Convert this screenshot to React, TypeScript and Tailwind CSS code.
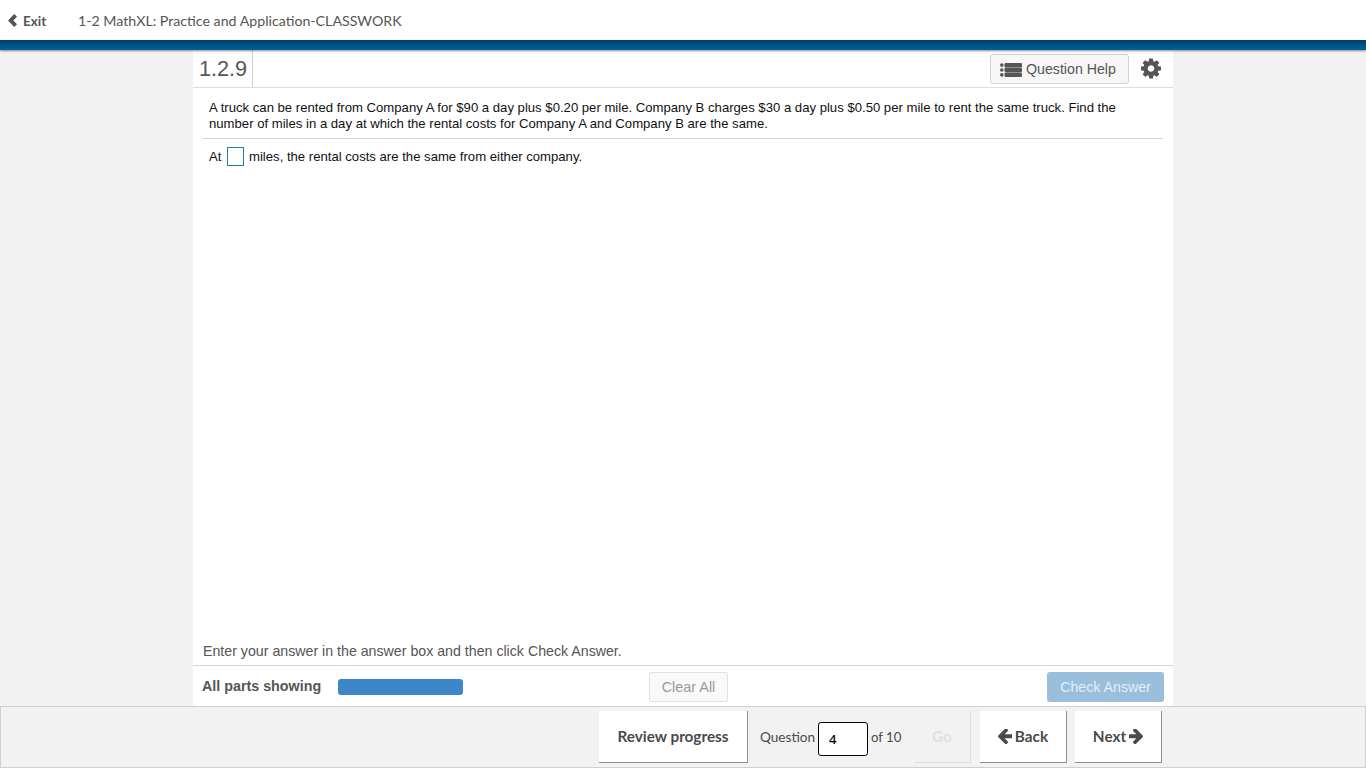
import React from "react";

const Gear = () => (
  <svg width="20" height="21" viewBox="0 0 1536 1536" fill="#555">
    <path d="M1024 768q0-106-75-181t-181-75-181 75-75 181 75 181 181 75 181-75 75-181zm512-109v222q0 12-8 23t-20 13l-185 28q-19 54-39 91 35 50 107 138 10 12 10 25t-9 23q-27 37-99 108t-94 71q-12 0-26-9l-138-108q-44 23-91 38-16 136-29 186-7 28-36 28h-222q-14 0-24.5-8.5t-11.5-21.5l-28-184q-49-16-90-37l-141 107q-10 9-25 9-14 0-25-11-126-114-165-168-7-10-7-23 0-12 8-23 15-21 51-66.5t54-70.5q-27-50-41-99l-183-27q-13-2-21-12.5t-8-23.5v-222q0-12 8-23t19-13l186-28q14-46 39-92-40-57-107-138-10-12-10-24 0-10 9-23 26-36 98.5-107.5t94.5-71.5q13 0 26 10l138 107q44-23 91-38 16-136 29-186 7-28 36-28h222q14 0 24.5 8.5t11.5 21.5l28 184q49 16 90 37l142-107q9-9 24-9 13 0 25 10 129 119 165 170 7 8 7 22 0 12-8 23-15 21-51 66.5t-54 70.5q26 50 41 98l183 28q13 2 21 12.5t8 23.5z" />
  </svg>
);

const ListIcon = () => (
  <svg width="22" height="14" viewBox="0 0 22 14" fill="#555">
    <circle cx="1.8" cy="2.1" r="1.8" />
    <circle cx="1.8" cy="7" r="1.8" />
    <circle cx="1.8" cy="11.9" r="1.8" />
    <rect x="4.5" y="0" width="17.5" height="4.4" rx="1.2" />
    <rect x="4.5" y="4.8" width="17.5" height="4.4" rx="1.2" />
    <rect x="4.5" y="9.6" width="17.5" height="4.4" rx="1.2" />
  </svg>
);

const Arrow = ({ left }: { left?: boolean }) => (
  <svg width="14" height="15" viewBox="96 200 1376 1360" fill="#4a4a4a" style={left ? { transform: "scaleX(-1)" } : undefined}>
    <path d="M1472 960q0 54-37 91l-651 651q-39 37-91 37-51 0-90-37l-75-75q-38-38-38-91t38-91l293-293h-704q-52 0-84.5-37.5t-32.5-90.5v-128q0-53 32.5-90.5t84.5-37.5h704l-293-294q-38-36-38-90t38-90l75-75q38-38 90-38 53 0 91 38l651 651q37 35 37 90z" transform="translate(0,-100) " />
  </svg>
);

export default function App() {
  return (
    <div className="h-[768px] w-[1366px] overflow-hidden flex flex-col bg-[#f2f2f2] font-['Liberation_Sans',Arial,sans-serif]">
      <header className="h-10 shrink-0 bg-white flex items-center pl-2 pt-[2px] font-['Lato',sans-serif] text-[#555]">
        <svg width="9" height="13" viewBox="0 0 9 13" fill="#555" className="mr-[6px] mb-[2px]">
          <path d="M6.2 0 L9 2.8 L5.3 6.5 L9 10.2 L6.2 13 L0 6.5 Z" />
        </svg>
        <span className="font-bold text-[13.5px] w-[55px]">Exit</span>
        <span className="text-[14.2px]">1-2 MathXL: Practice and Application-CLASSWORK</span>
      </header>
      <div className="h-[10px] shrink-0 bg-gradient-to-b from-[#003f68] to-[#006399] shadow-[0_1px_2px_rgba(0,0,0,0.45)] relative z-10" />

      <main className="w-[980px] h-[656px] shrink-0 ml-[193px] bg-white flex flex-col">
        <div className="h-[38px] shrink-0 border-b border-[#dedede] flex items-center">
          <div className="w-[60px] h-full border-r border-[#cfcfcf] pl-[6px] text-[21.6px] leading-[37px] text-[#555]">1.2.9</div>
          <button className="ml-auto w-[139px] h-[30px] mr-[44px] mt-[1px] pt-[2px] rounded-[3px] border border-[#d4d4d4] bg-[#f7f7f7] flex items-center pl-[9px] gap-[4px] text-[14.2px] text-[#555]">
            <ListIcon />
            Question Help
          </button>
          <div className="absolute left-[1141px] top-[58px]"><Gear /></div>
        </div>

        <div className="flex-1 min-h-0 px-[10px] text-[13.13px] text-[#111]">
          <div className="pl-[6px] pr-[40px] pt-[12px] pb-[6px] leading-4 border-b border-[#d4d4d4]">
            A truck can be rented from Company A for $90 a day plus $0.20 per mile. Company B charges $30 a day plus $0.50 per mile to rent the same truck. Find the number of miles in a day at which the rental costs for Company A and Company B are the same.
          </div>
          <div className="pl-[6px] pt-[8px] flex items-center h-[26px]">
            <span className="w-[18px] pt-[1px]">At</span>
            <span className="inline-block w-[17px] h-[19px] mr-[5px] border border-[#1f8296]" />
            <span className="pt-[1px]">miles, the rental costs are the same from either company.</span>
          </div>
        </div>

        <div className="h-[28px] shrink-0 border-b border-[#d4d4d4] px-[10px] text-[14.2px] leading-[26px] text-[#555]">
          Enter your answer in the answer box and then click Check Answer.
        </div>
        <div className="h-[40px] shrink-0 flex items-center pl-[9px] pr-[9px] text-[#555]">
          <span className="font-bold text-[14.3px] w-[136px] pt-[2px]">All parts showing</span>
          <div className="w-[125px] h-4 mt-[1px] rounded-[3px] bg-[#3d87c8]" />
          <button className="ml-[186px] w-[79px] h-[30px] mt-[2px] pt-[2px] rounded-[2px] border border-[#e2e2e2] bg-[#f9f9f9] text-[14.4px] text-[#999]">Clear All</button>
          <button className="ml-auto w-[117px] h-[30px] mt-[2px] pt-[2px] rounded-[3px] bg-[#99bfdd] text-[14.2px] text-[#e2eef8]">Check Answer</button>
        </div>
      </main>

      <footer className="flex-1 min-h-0 border border-[#cfcfcf] flex items-start pt-[4px] pr-[203px] justify-end font-['Lato',sans-serif] text-[#4a4a4a]">
        <button className="w-[149px] h-[52px] bg-white font-bold text-[15.3px] border-r border-b border-[#8f8f8f]">Review progress</button>
        <span className="ml-[12px] mt-[17px] w-[54px] text-[13.6px] leading-[18px] whitespace-nowrap">Question</span>
        <span className="ml-[4px] mt-[11px] w-[50px] h-[34px] rounded-[3px] border border-black bg-white text-black text-[13px] font-medium leading-[32px] pl-[10px] font-['Noto_Sans',sans-serif]">4</span>
        <span className="ml-[3px] mt-[17px] w-[30px] text-[13.2px] leading-[18px] whitespace-nowrap">of 10</span>
        <button className="ml-[13px] w-[57px] h-[52px] bg-[#f2f2f2] border-r border-b border-[#dcdcdc] text-[#e0e0e0] font-bold text-[15.3px]">Go</button>
        <button className="ml-[9px] w-[87px] h-[52px] bg-white border-r border-b border-[#8f8f8f] font-bold text-[15.3px] flex items-center justify-center gap-[3px]"><Arrow left />Back</button>
        <button className="ml-[8px] w-[87px] h-[52px] bg-white border-r border-b border-[#8f8f8f] font-bold text-[15.3px] flex items-center justify-center gap-[3px]">Next<Arrow /></button>
      </footer>
    </div>
  );
}
